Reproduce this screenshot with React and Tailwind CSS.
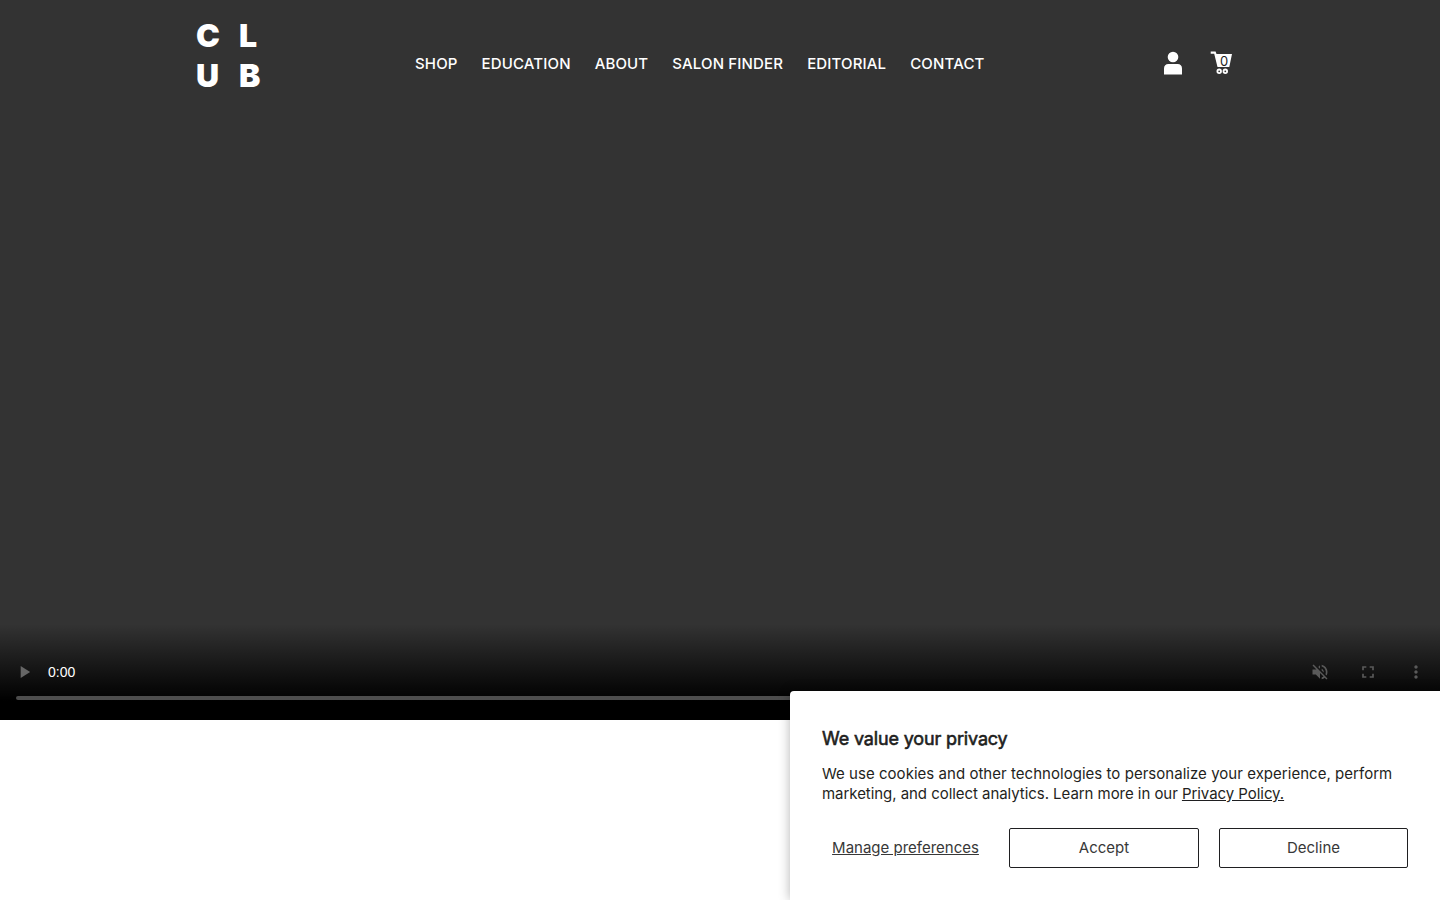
const navLinks = ['SHOP', 'EDUCATION', 'ABOUT', 'SALON FINDER', 'EDITORIAL', 'CONTACT'];

function Logo() {
  return (
    <a
      href="#"
      className="grid w-[68px] grid-cols-[43px_1fr] grid-rows-[40px_40px] text-[32px] leading-[40px] font-black text-white"
    >
      <span>C</span>
      <span>L</span>
      <span>U</span>
      <span>B</span>
    </a>
  );
}

function Header() {
  return (
    <header className="flex h-[126px] pl-[196px] pr-[207px]">
      <div className="w-[219px] pt-4">
        <Logo />
      </div>
      <nav className="flex flex-1 gap-6 pt-[52px] text-[15px] leading-6 font-medium tracking-[0.15px] text-white">
        {navLinks.map((link) => (
          <a key={link} href="#" className="whitespace-nowrap">
            {link}
          </a>
        ))}
      </nav>
      <div className="flex gap-[27px] pt-[51px]">
        <a href="#" aria-label="Account">
          <svg width="20" height="24" viewBox="0 0 20 24" fill="#fff">
            <circle cx="10" cy="6" r="5.3" />
            <path d="M1 23.5v-6.2c0-2.6 1.8-4.3 4.3-4.3h9.4c2.5 0 4.3 1.7 4.3 4.3v6.2z" />
          </svg>
        </a>
        <a href="#" aria-label="Cart" className="relative">
          <svg width="23" height="24" viewBox="0 0 23 24" fill="#fff">
            <path d="M.7.5h4.9l.9 2.500H22l-2.700 13.100H7.500L4.200 2.800H.7z" />
            <circle cx="9.200" cy="20.300" r="1.800" fill="none" stroke="#fff" strokeWidth="1.800" />
            <circle cx="15.300" cy="20.300" r="1.800" fill="none" stroke="#fff" strokeWidth="1.800" />
          </svg>
          <span className="absolute top-[2px] left-[10px] text-[13px] leading-4 text-[#222]">0</span>
        </a>
      </div>
    </header>
  );
}

function VideoControls() {
  return (
    <div className="mt-auto flex h-[96px] flex-col bg-linear-to-b from-transparent to-black to-80%">
      <div className="mt-8 flex h-8 items-center pr-3.5 pl-3">
        <svg width="24" height="24" viewBox="0 0 24 24" fill="#666">
          <path d="M8 5v14l11-7z" transform="translate(1.800 1.700) scale(.86)" />
        </svg>
        <span className="ml-3 font-['Liberation_Sans',sans-serif] text-sm text-white">0:00</span>
        <div className="ml-auto flex gap-7">
          <svg width="20" height="20" viewBox="0 0 24 24" fill="#5a5a5a">
            <path d="M16.500 12c0-1.770-1.020-3.290-2.500-4.030v2.210l2.450 2.450c.03-.2.050-.41.050-.63zm2.500 0c0 .94-.2 1.820-.54 2.640l1.510 1.510C20.630 14.910 21 13.500 21 12c0-4.280-2.990-7.860-7-8.770v2.060c2.890.86 5 3.540 5 6.710zM4.270 3L3 4.270 7.730 9H3v6h4l5 5v-6.730l4.250 4.250c-.67.52-1.420.93-2.250 1.180v2.060c1.380-.31 2.630-.95 3.690-1.810L19.730 21 21 19.730l-9-9L4.270 3zM12 4L9.910 6.090 12 8.180V4z" />
          </svg>
          <svg width="20" height="20" viewBox="0 0 24 24" fill="#5a5a5a">
            <path d="M7 14H5v5h5v-2H7v-3zm-2-4h2V7h3V5H5v5zm12 7h-3v2h5v-5h-2v3zM14 5v2h3v3h2V5h-5z" />
          </svg>
          <svg width="20" height="20" viewBox="0 0 24 24" fill="#5a5a5a">
            <path d="M12 8c1.100 0 2-.9 2-2s-.9-2-2-2-2 .9-2 2 .9 2 2 2zm0 2c-1.100 0-2 .9-2 2s.9 2 2 2 2-.9 2-2-.9-2-2-2zm0 6c-1.100 0-2 .9-2 2s.9 2 2 2 2-.9 2-2-.9-2-2-2z" />
          </svg>
        </div>
      </div>
      <div className="mx-4 mt-2 h-1 rounded-full bg-[#4d4d4d]" />
    </div>
  );
}

function CookieBanner() {
  return (
    <section className="absolute right-0 bottom-0 h-[209px] w-[650px] rounded-tl bg-white px-8 pt-9 text-[#1f1f21] shadow-[0_0_12px_rgba(0,0,0,0.3)]">
      <h2 className="text-lg leading-6 font-normal tracking-[-0.15px] [-webkit-text-stroke:0.6px_#1f1f21]">
        We value your privacy
      </h2>
      <p className="mt-[13px] text-[15px] leading-5 tracking-[0.035px]">
        We use cookies and other technologies to personalize your experience, perform
        <br />
        <span className="tracking-[-0.05px]">
          marketing, and collect analytics. Learn more in our{' '}
          <a href="#" className="underline">
            Privacy Policy.
          </a>
        </span>
      </p>
      <div className="mt-6 flex h-10 text-[15px] text-[#383838]">
        <button className="w-[167px] underline">Manage preferences</button>
        <button className="ml-5 w-[190px] rounded-xs border border-[#1f1f21]">Accept</button>
        <button className="ml-5 flex-1 rounded-xs border border-[#1f1f21]">Decline</button>
      </div>
    </section>
  );
}

export default function App() {
  return (
    <div className="relative h-[900px] w-[1440px] overflow-hidden bg-white font-[Inter,sans-serif]">
      <div className="flex h-[720px] flex-col bg-[#333]">
        <Header />
        <VideoControls />
      </div>
      <CookieBanner />
    </div>
  );
}
